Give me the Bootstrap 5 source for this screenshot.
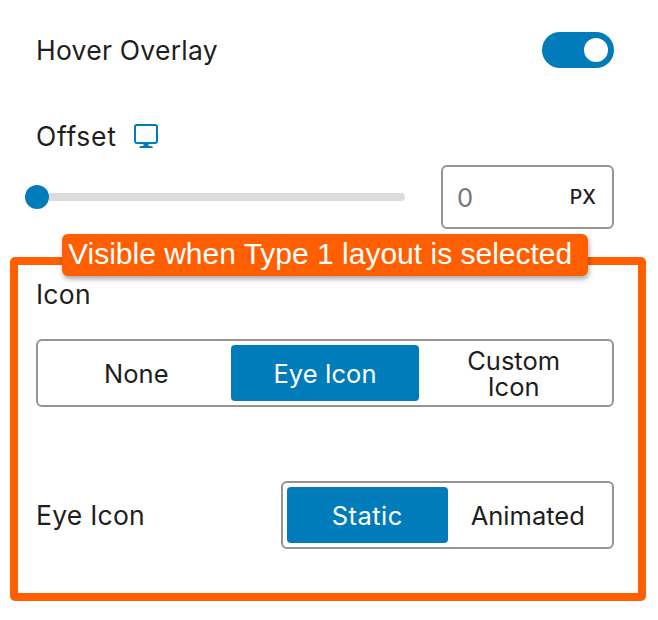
<!DOCTYPE html>
<html lang="en">
<head>
<meta charset="utf-8">
<meta name="viewport" content="width=device-width, initial-scale=1">
<title>Hover Overlay settings</title>
<link href="https://cdn.jsdelivr.net/npm/bootstrap@5.3.0/dist/css/bootstrap.min.css" rel="stylesheet">
<style>
  :root { --accent: #007cba; --callout: #ff5f00; --line: #949494; --ink: #1e1e1e; }
  body { font-family: Inter, "Liberation Sans", sans-serif; font-size: 26.500px; letter-spacing: .25px; line-height: 32px; color: var(--ink); background: #fff; }
  .panel { width: 658px; height: 620px; padding-top: 32px; overflow: hidden; }
  .panel-row { padding-left: 36px; padding-right: 44px; }
  .toggle { width: 72px; height: 36px; padding: 6px; background: var(--accent); }
  .toggle-knob { width: 24px; height: 24px; }
  .offset-head { margin-top: 52px; gap: 17px; height: 32px; }
  .offset-text { width: 80px; letter-spacing: .7px; }
  .offset-row { padding-left: 25px; margin-top: 13px; height: 64px; gap: 36px; }
  .slider-thumb { width: 24px; height: 24px; background: var(--accent); }
  .slider-track { height: 8px; background: #dcdcdc; border-radius: 0 4px 4px 0; }
  .unit-input { width: 173px; height: 64px; border: 2px solid var(--line); border-radius: 6px; padding: 0 16px 0 14px; color: #757575; font-size: 25.500px; }
  .unit-value { padding-top: 2px; }
  .unit { font-size: 19.500px; font-weight: 500; letter-spacing: 0; color: var(--ink); }
  .callout-frame { margin: 28px 12px 0 10px; height: 344px; border: 8px solid var(--callout); border-radius: 5px; padding: 0 24px 0 18px; }
  .callout-label { left: 44px; top: -31px; width: 526px; height: 42px; padding-left: 6px; background: var(--callout); border-radius: 6px; box-shadow: 1px 3px 5px rgba(0,0,0,.35); color: #fff; font-family: "Liberation Sans", Arial, sans-serif; font-size: 30px; letter-spacing: 0; line-height: 40px; white-space: nowrap; }
  .icon-title { padding-top: 13px; }
  .segmented { height: 68px; border: 2px solid var(--line); border-radius: 6px; padding: 4px; font-size: 25.500px; letter-spacing: 0; line-height: 26px; text-align: center; }
  .segmented > div { padding-top: 2px; }
  .seg-active { background: var(--accent); color: #fff; border-radius: 4px; }
  .seg-icon { margin-top: 29px; }
  .seg-eye { width: 333px; }
  .seg-static { letter-spacing: .5px; }
  .eye-row { margin-top: 74px; }
</style>
</head>
<body>
<main class="panel">
  <div class="panel-row d-flex justify-content-between align-items-center">
    <span>Hover Overlay</span>
    <span class="toggle rounded-pill d-flex justify-content-end"><span class="toggle-knob rounded-circle bg-white"></span></span>
  </div>
  <div class="panel-row offset-head d-flex align-items-center">
    <span class="offset-text">Offset</span>
    <svg width="26" height="26" viewBox="0 0 26 26" fill="none" stroke="#007cba" stroke-width="2">
      <rect x="2" y="2" width="22" height="18" rx="2"/>
      <path d="M10.500 20.500h5v2.500h-5z" fill="#007cba" stroke="none"/>
      <path d="M6 25c0-1.500 2-2.300 4.500-2.300h5c2.500 0 4.500.8 4.500 2.300z" fill="#007cba" stroke="none"/>
    </svg>
  </div>
  <div class="panel-row offset-row d-flex align-items-center">
    <div class="flex-grow-1 d-flex align-items-center">
      <span class="slider-thumb rounded-circle"></span>
      <span class="slider-track flex-grow-1"></span>
    </div>
    <div class="unit-input d-flex justify-content-between align-items-center">
      <span class="unit-value">0</span><span class="unit">PX</span>
    </div>
  </div>
  <section class="callout-frame position-relative">
    <div class="callout-label position-absolute">Visible when Type 1 layout is selected</div>
    <div class="icon-title">Icon</div>
    <div class="segmented seg-icon d-flex">
      <div class="col-4 d-flex align-items-center justify-content-center">None</div>
      <div class="col-4 seg-active d-flex align-items-center justify-content-center">Eye Icon</div>
      <div class="col-4 d-flex align-items-center justify-content-center">Custom<br>Icon</div>
    </div>
    <div class="eye-row d-flex justify-content-between align-items-center">
      <span>Eye Icon</span>
      <div class="segmented seg-eye d-flex">
        <div class="col-6 seg-active seg-static d-flex align-items-center justify-content-center">Static</div>
        <div class="col-6 d-flex align-items-center justify-content-center">Animated</div>
      </div>
    </div>
  </section>
</main>
<script src="https://cdn.jsdelivr.net/npm/bootstrap@5.3.0/dist/js/bootstrap.bundle.min.js"></script>
</body>
</html>
